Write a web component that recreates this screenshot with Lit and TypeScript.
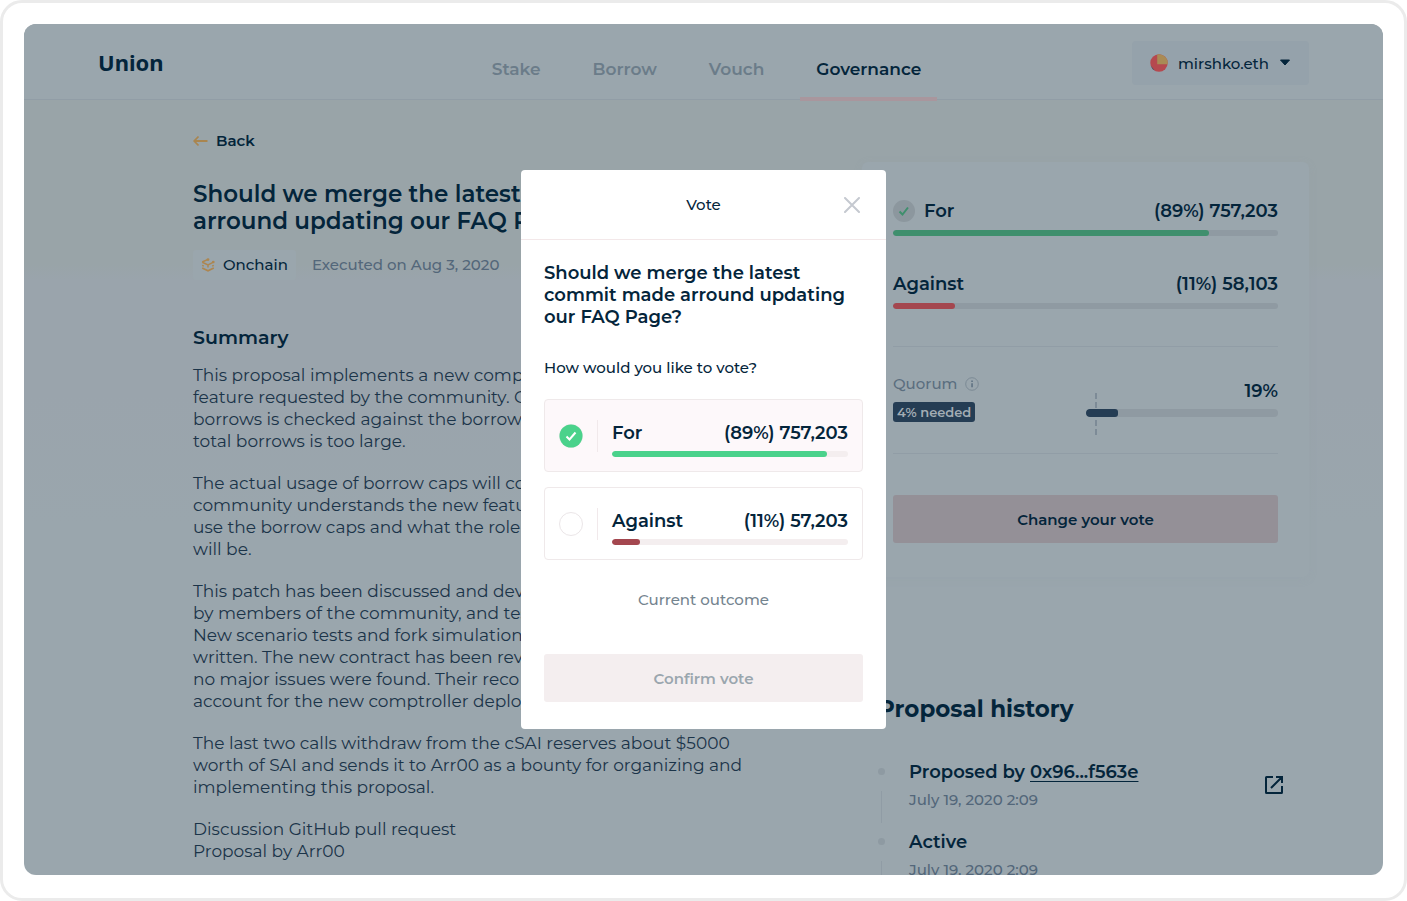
import { LitElement, html, css } from "lit";
import { customElement, property, state } from "lit/decorators.js";
import { classMap } from "lit/directives/class-map.js";
import { styleMap } from "lit/directives/style-map.js";

const PARAGRAPHS: string[][] = [
  [
    "This proposal implements a new comptroller",
    "feature requested by the community. On any",
    "borrows is checked against the borrow cap if",
    "total borrows is too large.",
  ],
  [
    "The actual usage of borrow caps will come as",
    "community understands the new feature, how to",
    "use the borrow caps and what the role of caps",
    "will be.",
  ],
  [
    "This patch has been discussed and developed",
    "by members of the community, and tested.",
    "New scenario tests and fork simulations were",
    "written. The new contract has been reviewed,",
    "no major issues were found. Their reco",
    "account for the new comptroller deploy.",
  ],
  [
    "The last two calls withdraw from the cSAI reserves about $5000",
    "worth of SAI and sends it to Arr00 as a bounty for organizing and",
    "implementing this proposal.",
  ],
  ["Discussion GitHub pull request", "Proposal by Arr00"],
];

const lines = (rows: string[]) => rows.map((row, i) => (i ? html`<br />${row}` : row));

const reset = css`
  *,
  *::before,
  *::after {
    box-sizing: border-box;
  }
  h1,
  h2,
  h3,
  p,
  ul,
  fieldset {
    margin: 0;
    padding: 0;
    border: 0;
    min-width: 0;
  }
  ul {
    list-style: none;
  }
  button {
    font: inherit;
    color: inherit;
    border: 0;
    padding: 0;
    background: none;
    cursor: pointer;
  }
  a {
    color: inherit;
    text-decoration: none;
  }
  svg {
    display: block;
    flex: none;
  }
`;

@customElement("vote-bar")
export class VoteBar extends LitElement {
  @property({ type: Number }) value = 0;
  @property() color = "";

  static styles = css`
    :host {
      display: block;
      height: 6px;
      border-radius: 3px;
      background: var(--track);
      overflow: hidden;
    }
    .fill {
      height: 100%;
      border-radius: 3px;
    }
  `;

  render() {
    return html`<div class="fill" style=${styleMap({ width: `${this.value}%`, background: this.color })}></div>`;
  }
}

@customElement("site-header")
export class SiteHeader extends LitElement {
  static styles = [
    reset,
    css`
      :host {
        display: block;
        background: #9aa6ad;
        border-bottom: 1px solid #919da6;
      }
      .row {
        display: grid;
        grid-template-columns: 1fr auto 1fr;
        height: 75px;
        width: min(1211px, 100% - 48px);
        margin: 0 auto;
      }
      .logo {
        font: 700 22px/30px "Noto Sans", sans-serif;
        padding-top: 23px;
      }
      .nav {
        display: flex;
        gap: 20px;
        height: 77px;
        padding-left: 6px;
      }
      .tab {
        padding: 32px 16px 0;
        font-size: 17px;
        line-height: 26px;
        font-weight: 600;
        color: #6b7c89;
        border-bottom: 4px solid transparent;
      }
      .tab.active {
        color: #04253b;
        border-color: #a9969d;
      }
      .account {
        justify-self: end;
        margin-top: 17px;
        height: 44px;
        padding: 0 18px;
        border-radius: 4px;
        background: #95a2ab;
        display: flex;
        align-items: center;
        gap: 10px;
        font-size: 15px;
        font-weight: 500;
      }
    `,
  ];

  render() {
    const tabs = ["Stake", "Borrow", "Vouch", "Governance"];
    return html`
      <div class="row">
        <a class="logo" href="#">Union</a>
        <nav class="nav">
          ${tabs.map((t) => html`<a href="#" class=${classMap({ tab: true, active: t === "Governance" })}>${t}</a>`)}
        </nav>
        <button class="account">
          <svg width="18" height="18" viewBox="0 0 18 18">
            <circle cx="9" cy="9" r="8.7" fill="#b5494f" />
            <path d="M.6 11.500A8.700 8.700 0 0 0 5 16.700Z" fill="#3c5468" />
            <path d="M7.200 .5A8.700 8.700 0 0 1 17.600 10.300H7.200Z" fill="#a98b55" />
          </svg>
          mirshko.eth
          <svg width="12" height="8" viewBox="0 0 12 8">
            <path d="M1.5 1h9L6 6Z" fill="#04253b" stroke="#04253b" stroke-linejoin="round" />
          </svg>
        </button>
      </div>
    `;
  }
}

@customElement("proposal-body")
export class ProposalBody extends LitElement {
  static styles = [
    reset,
    css`
      :host {
        display: block;
        padding-top: 30px;
        white-space: nowrap;
      }
      .back {
        display: inline-flex;
        align-items: center;
        gap: 8px;
        font-size: 15px;
        line-height: 22px;
        font-weight: 600;
      }
      .title {
        margin-top: 29px;
        font-size: 23px;
        line-height: 27px;
        font-weight: 600;
      }
      .meta {
        display: flex;
        align-items: center;
        gap: 16px;
        margin-top: 15px;
        font-size: 15px;
        line-height: 30px;
        font-weight: 500;
        color: #53677a;
      }
      .chip {
        display: flex;
        align-items: center;
        gap: 8px;
        padding: 0 8px;
        border-radius: 3px;
        background: #9aa6ad;
        color: #04253b;
      }
      .subtitle {
        margin-top: 46px;
        font-size: 19px;
        line-height: 24px;
        font-weight: 600;
      }
      .text {
        margin-top: 14px;
        display: grid;
        gap: 20px;
        font-size: 17px;
        line-height: 22px;
        color: #1b3449;
      }
    `,
  ];

  render() {
    return html`
      <a class="back" href="#">
        <svg width="15" height="12" viewBox="0 0 15 12" fill="none" stroke="#a9854f" stroke-width="1.8">
          <path d="M14.500 6H1.5M5.500 1.500 1.2 6 5.500 10.500" />
        </svg>
        Back
      </a>
      <h1 class="title">Should we merge the latest commit made<br />arround updating our FAQ Page?</h1>
      <div class="meta">
        <span class="chip">
          <svg width="14" height="14" viewBox="0 0 14 14" fill="none" stroke="#ad8650" stroke-width="1.5">
            <path d="M1.200 4 6.500 1.600M1.200 4.200 7 7l5.500-2.800M7 7v2.500M1.200 10 7 12.800l5.800-2.800M1.200 7.400l1.600.8M12.800 7.400l-1.600.8" />
            <circle cx="7" cy="1.600" r=".7" fill="#ad8650" />
            <circle cx="12.300" cy="4" r=".6" fill="#ad8650" />
          </svg>
          Onchain
        </span>
        <span>Executed on Aug 3, 2020</span>
      </div>
      <h2 class="subtitle">Summary</h2>
      <div class="text">${PARAGRAPHS.map((p) => html`<p>${lines(p)}</p>`)}</div>
    `;
  }
}

@customElement("results-card")
export class ResultsCard extends LitElement {
  static styles = [
    reset,
    css`
      :host {
        display: block;
        --track: #8f9aa2;
        background: #9aa6ad;
        border-radius: 6px;
        box-shadow: 0 2px 8px rgba(140, 155, 165, 0.16);
        padding: 36px 31px 34px;
      }
      .result {
        display: flex;
        align-items: center;
        gap: 9px;
        font-size: 18px;
        line-height: 26px;
        font-weight: 600;
        padding-bottom: 6px;
      }
      .score {
        margin-left: auto;
      }
      .against {
        margin-top: 35px;
      }
      .quorum {
        display: flex;
        justify-content: space-between;
        margin-top: 37px;
        padding: 26px 0 31px;
        border-top: 1px solid #919da6;
        border-bottom: 1px solid #919da6;
      }
      .label {
        display: flex;
        align-items: center;
        gap: 8px;
        font-size: 15px;
        line-height: 22px;
        font-weight: 500;
        color: #5b6e7f;
      }
      .needed {
        display: inline-block;
        margin-top: 7px;
        padding: 0 4px;
        border-radius: 3px;
        background: #253d54;
        color: #a3adb4;
        font-size: 13px;
        line-height: 20px;
        font-weight: 600;
      }
      .gauge {
        position: relative;
        width: 50%;
        text-align: right;
        font-size: 18px;
        line-height: 26px;
        font-weight: 600;
        padding-top: 5px;
      }
      .gauge vote-bar {
        position: relative;
        height: 8px;
        margin-top: 5px;
        border-radius: 4px;
      }
      .mark {
        position: absolute;
        left: 5%;
        top: 20px;
        height: 42px;
        border-left: 2px dashed #7d8b97;
      }
      .change {
        display: block;
        width: 100%;
        margin-top: 41px;
        height: 48px;
        border-radius: 3px;
        background: #949097;
        font-size: 15px;
        font-weight: 600;
      }
    `,
  ];

  render() {
    return html`
      <div class="result">
        <svg width="22" height="22" viewBox="0 0 22 22">
          <circle cx="11" cy="11" r="11" fill="#8c979e" />
          <path d="m6.500 11.500 3 3 5.500-7" fill="none" stroke="#3f8f6d" stroke-width="2" />
        </svg>
        <span>For</span><span class="score">(89%) 757,203</span>
      </div>
      <vote-bar value="82" color="#3f8f6d"></vote-bar>
      <div class="result against"><span>Against</span><span class="score">(11%) 58,103</span></div>
      <vote-bar value="16" color="#a4474f"></vote-bar>
      <div class="quorum">
        <div>
          <div class="label">
            Quorum
            <svg width="14" height="14" viewBox="0 0 14 14">
              <circle cx="7" cy="7" r="6.3" fill="none" stroke="#7c8a95" />
              <path d="M6.300 3.500h1.500v1.500h-1.500zM6.300 6.200h1.500v4h-1.500z" fill="#5b6e7f" />
            </svg>
          </div>
          <span class="needed">4% needed</span>
        </div>
        <div class="gauge">
          <div class="mark"></div>
          19%
          <vote-bar value="17" color="#253d54"></vote-bar>
        </div>
      </div>
      <button class="change">Change your vote</button>
    `;
  }
}

@customElement("proposal-history")
export class ProposalHistory extends LitElement {
  static styles = [
    reset,
    css`
      :host {
        display: block;
        padding: 0 25px 0 16px;
      }
      .title {
        font-size: 23px;
        line-height: 30px;
        font-weight: 700;
      }
      .list {
        margin-top: 34px;
      }
      .event {
        display: grid;
        grid-template-columns: 7px 1fr auto;
        column-gap: 24px;
        height: 70px;
      }
      .rail {
        display: flex;
        flex-direction: column;
        align-items: center;
        gap: 16px;
        padding-top: 10px;
      }
      .rail::before {
        content: "";
        width: 7px;
        height: 7px;
        border-radius: 50%;
        background: #8e9aa2;
      }
      .rail::after {
        content: "";
        width: 1px;
        height: 32px;
        background: #909ca5;
      }
      .what {
        font-size: 18px;
        line-height: 28px;
        font-weight: 600;
      }
      .what a {
        text-decoration: underline;
        text-decoration-thickness: 1px;
        text-underline-offset: 3px;
      }
      .when {
        font-size: 15px;
        line-height: 28px;
        font-weight: 500;
        color: #53677a;
      }
      .open {
        margin-top: 17px;
      }
    `,
  ];

  render() {
    return html`
      <h2 class="title">Proposal history</h2>
      <ul class="list">
        <li class="event">
          <span class="rail"></span>
          <div>
            <p class="what">Proposed by <a href="#">0x96...f563e</a></p>
            <p class="when">July 19, 2020 2:09</p>
          </div>
          <a class="open" href="#" aria-label="Open transaction">
            <svg width="20" height="20" viewBox="0 0 20 20" fill="none" stroke="#04253b" stroke-width="2">
              <path d="M9 2H2.500Q2 2 2 2.500V17.500Q2 18 2.500 18H17.500Q18 18 18 17.500V11M12 2H18V8M18 2 7 13" />
            </svg>
          </a>
        </li>
        <li class="event">
          <span class="rail"></span>
          <div>
            <p class="what">Active</p>
            <p class="when">July 19, 2020 2:09</p>
          </div>
        </li>
      </ul>
    `;
  }
}

const OPTIONS = [
  { id: "for", name: "For", score: "(89%) 757,203", fill: 91, color: "#4ad28b" },
  { id: "against", name: "Against", score: "(11%) 57,203", fill: 12, color: "#a4474f" },
];

@customElement("vote-dialog")
export class VoteDialog extends LitElement {
  @state() private choice = "for";

  static styles = [
    reset,
    css`
      :host {
        display: block;
        width: 365px;
        max-width: 100%;
        background: #fff;
        border-radius: 4px;
        --track: #f4eeef;
      }
      .head {
        display: grid;
        grid-template-columns: 1fr auto 1fr;
        align-items: center;
        height: 70px;
        padding: 0 26px;
        border-bottom: 1px solid #f3e8e9;
        font-size: 15px;
        font-weight: 500;
      }
      .head h2 {
        grid-column: 2;
        font: inherit;
      }
      .close {
        justify-self: end;
      }
      .body {
        padding: 22px 23px 27px;
      }
      .question {
        margin-bottom: 29px;
        font-size: 18px;
        line-height: 22px;
        font-weight: 600;
      }
      .prompt {
        display: block;
        padding: 0;
        margin-bottom: 20px;
        font-size: 15px;
        line-height: 22px;
        font-weight: 500;
      }
      .option {
        display: flex;
        align-items: center;
        height: 73px;
        padding: 0 14px;
        border: 1px solid #efe9ea;
        border-radius: 4px;
        cursor: pointer;
      }
      .option + .option {
        margin-top: 15px;
      }
      .option.selected {
        background: #fdf8fa;
      }
      .radio {
        appearance: none;
        flex: none;
        width: 24px;
        height: 24px;
        margin: 0;
        border: 1px solid #ebe6e8;
        border-radius: 50%;
        background: #fff;
      }
      .dot {
        display: grid;
      }
      .dot > * {
        grid-area: 1 / 1;
      }
      .dot svg {
        pointer-events: none;
        visibility: hidden;
        position: relative;
      }
      .radio:checked + svg {
        visibility: visible;
      }
      .result {
        flex: 1;
        margin-left: 14px;
        padding: 6px 0 0 15px;
        background: linear-gradient(#f1e9eb, #f1e9eb) 0 6px / 1px 32px no-repeat;
      }
      .line {
        display: flex;
        justify-content: space-between;
        font-size: 18px;
        line-height: 26px;
        font-weight: 600;
        padding-bottom: 5px;
      }
      .outcome {
        margin: 28px 0 42px;
        text-align: center;
        font-size: 15px;
        line-height: 24px;
        font-weight: 500;
        color: #74848f;
      }
      .confirm {
        display: block;
        width: 100%;
        height: 48px;
        border-radius: 3px;
        background: #f4eeef;
        color: #9aa6ae;
        font-size: 15px;
        font-weight: 600;
      }
    `,
  ];

  render() {
    return html`
      <header class="head">
        <h2>Vote</h2>
        <button class="close" aria-label="Close">
          <svg width="16" height="16" viewBox="0 0 16 16" stroke="#c5c9d0" stroke-width="2" stroke-linecap="round">
            <path d="m1 1 14 14M15 1 1 15" />
          </svg>
        </button>
      </header>
      <div class="body">
        <h3 class="question">Should we merge the latest<br />commit made arround updating<br />our FAQ Page?</h3>
        <fieldset>
          <legend class="prompt">How would you like to vote?</legend>
          ${OPTIONS.map(
            (o) => html`
              <label class=${classMap({ option: true, selected: this.choice === o.id })}>
                <span class="dot">
                  <input
                    class="radio"
                    type="radio"
                    name="vote"
                    .checked=${this.choice === o.id}
                    @change=${() => (this.choice = o.id)}
                  />
                  <svg width="24" height="24" viewBox="0 0 24 24">
                    <circle cx="12" cy="12" r="11.500" fill="#4ad28b" />
                    <path d="m7.500 12.500 3 3 6-7" fill="none" stroke="#fff" stroke-width="2" />
                  </svg>
                </span>
                <span class="result">
                  <span class="line"><span>${o.name}</span><span>${o.score}</span></span>
                  <vote-bar value=${o.fill} color=${o.color}></vote-bar>
                </span>
              </label>
            `
          )}
        </fieldset>
        <p class="outcome">Current outcome</p>
        <button class="confirm" disabled>Confirm vote</button>
      </div>
    `;
  }
}

@customElement("app-root")
export class AppRoot extends LitElement {
  static styles = [
    reset,
    css`
      :host {
        display: block;
        position: relative;
        height: 100vh;
        padding: 21px 21px 23px;
        border: 3px solid #ebebeb;
        border-radius: 22px;
        box-sizing: border-box;
        background: #fff;
        font-family: Montserrat, Inter, sans-serif;
        color: #04253b;
      }
      .frame {
        height: 100%;
        overflow: hidden;
        border-radius: 12px;
        background: linear-gradient(#99a4a8 240px, #9aa4ac 256px, #9aa4ac 370px, #9aa6ad 500px);
      }
      .main {
        display: grid;
        grid-template-columns: minmax(0, 1fr) 447px;
        gap: 24px;
        width: min(1211px, 100% - 48px);
        margin: 0 auto;
        padding-left: 95px;
      }
      .side {
        padding-top: 62px;
      }
      .side proposal-history {
        margin-top: 117px;
      }
      .overlay {
        position: absolute;
        inset: 0;
        display: grid;
        place-items: center;
        padding-bottom: 2px;
      }
    `,
  ];

  render() {
    return html`
      <div class="frame">
        <site-header></site-header>
        <main class="main">
          <proposal-body></proposal-body>
          <div class="side">
            <results-card></results-card>
            <proposal-history></proposal-history>
          </div>
        </main>
      </div>
      <div class="overlay"><vote-dialog role="dialog" aria-label="Vote"></vote-dialog></div>
    `;
  }
}
